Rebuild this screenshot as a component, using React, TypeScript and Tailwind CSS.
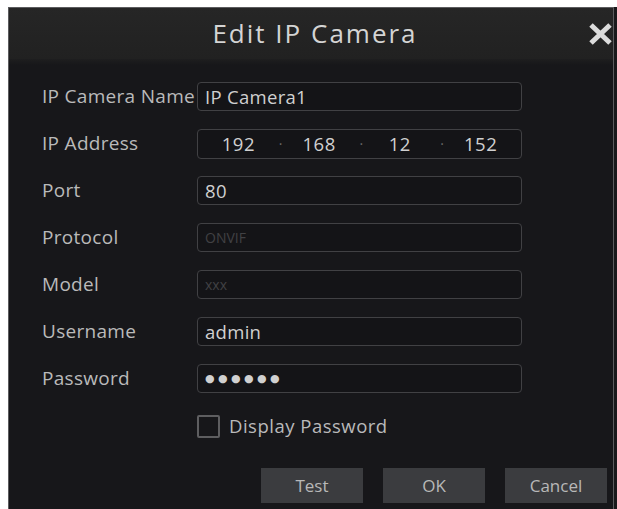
import React from "react";

const font = { fontFamily: '"Open Sans", "DejaVu Sans", sans-serif' };

function Field({ label, children }: { label: string; children: React.ReactNode }) {
  return (
    <div className="flex h-[47px] items-center">
      <div className="w-[155px] shrink-0 whitespace-nowrap text-[19px] font-medium tracking-[0.3px] text-[#bababa]">{label}</div>
      {children}
    </div>
  );
}

function TextBox({ value, disabled }: { value: string; disabled?: boolean }) {
  return (
    <div className="flex h-[29px] w-[325px] items-center rounded-[4px] border border-[#414144] bg-[#141417] px-[7px]">
      <span
        className={
          disabled
            ? "text-[14px] text-[#414144]"
            : "text-[18.5px] font-medium tracking-[0.3px] text-[#d0d0d0]"
        }
      >
        {value}
      </span>
    </div>
  );
}

function IpBox({ parts }: { parts: string[] }) {
  return (
    <div className="flex h-[30px] w-[325px] items-center rounded-[4px] border border-[#414144] bg-[#141417]">
      {parts.map((p, i) => (
        <React.Fragment key={i}>
          {i > 0 && <span className="w-0 text-center text-[14px] leading-none text-[#6a6a6a]">·</span>}
          <span className="flex-1 text-center text-[18.5px] font-medium tracking-[0.5px] text-[#d0d0d0]">{p}</span>
        </React.Fragment>
      ))}
    </div>
  );
}

function Button({ children }: { children: React.ReactNode }) {
  return (
    <button className="flex h-[35px] w-[102px] items-center justify-center bg-[#3b3c3f] text-[17px] text-[#b8b8b8]">
      {children}
    </button>
  );
}

export default function App() {
  return (
    <div className="h-[509px] w-[617px] bg-white pl-[8px] pt-[7px]" style={font}>
      <div className="flex h-full bg-[#19191b]">
        <div className="flex flex-1 flex-col border-l border-t border-r border-[#5c5c5e] bg-[#17171a]">
          {/* title bar */}
          <div className="relative flex h-[51px] items-center justify-center bg-gradient-to-b from-[#262626] to-[#212121] pl-[8px]">
            <span className="text-[26px] tracking-[2px] text-[#d4d4d4]">Edit IP Camera</span>
            <svg className="absolute right-[0px] top-[15px]" width="25" height="22" viewBox="0 0 25 22">
              <path d="M3 2 L22 20 M22 2 L3 20" stroke="#dcdcdc" strokeWidth="5" strokeLinecap="butt" />
            </svg>
          </div>
          <div className="h-[6px] bg-gradient-to-b from-[#1e1e1f] to-[#17171a]" />

          <div className="flex flex-1 flex-col pl-[33px] pt-[8px]">
            <Field label="IP Camera Name">
              <TextBox value="IP Camera1" />
            </Field>
            <Field label="IP Address">
              <IpBox parts={["192", "168", "12", "152"]} />
            </Field>
            <Field label="Port">
              <TextBox value="80" />
            </Field>
            <Field label="Protocol">
              <TextBox value="ONVIF" disabled />
            </Field>
            <Field label="Model">
              <TextBox value="xxx" disabled />
            </Field>
            <Field label="Username">
              <TextBox value="admin" />
            </Field>
            <Field label="Password">
              <div className="flex h-[29px] w-[325px] items-center rounded-[4px] border border-[#414144] bg-[#141417] px-[7px]">
                <span className="text-[11px] tracking-[3.4px] text-[#d0d0d0]">●●●●●●</span>
              </div>
            </Field>

            <div className="flex h-[48px] items-center pl-[155px]">
              <div className="h-[23px] w-[23px] rounded-[2px] border-2 border-[#5e5e60]" />
              <span className="ml-[9px] text-[18.5px] font-medium tracking-[0.5px] text-[#bababa]">Display Password</span>
            </div>

            <div className="mt-[18px] flex justify-end gap-[20px] pr-[6px]">
              <Button>Test</Button>
              <Button>OK</Button>
              <Button>Cancel</Button>
            </div>
          </div>
        </div>
        <div className="w-[3px]" />
      </div>
    </div>
  );
}
